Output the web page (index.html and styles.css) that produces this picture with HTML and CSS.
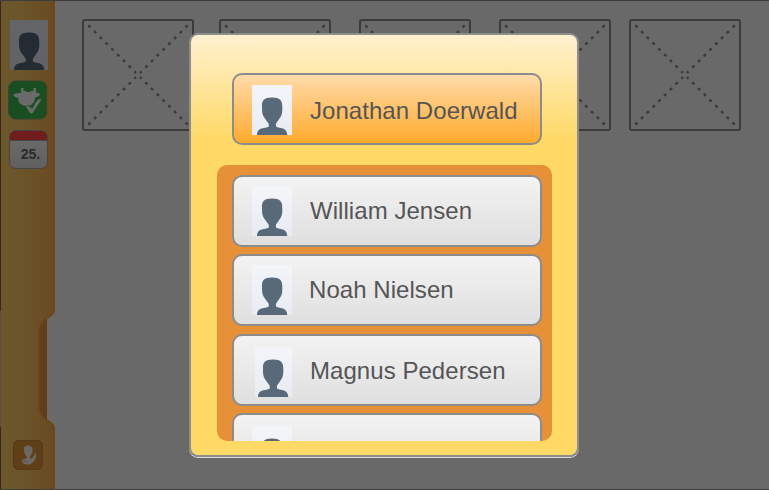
FILE: index.html
```html
<!DOCTYPE html>
<html lang="en">
<head>
<meta charset="utf-8">
<title>Choose profile</title>
<link rel="stylesheet" href="styles.css">
</head>
<body>
<svg class="defs" width="0" height="0" aria-hidden="true">
  <symbol id="person" viewBox="0 0 40 50">
    <path d="M10 22C9.500 15.500 12 12.500 20 12.500S30.500 15.500 30.300 22C30.500 29 29.500 31 26.500 35C24 38.500 23.800 38 24 41C24.500 43 28 42.300 31 43.500C34 44.500 35 47 35.300 50H5C5.200 47 6 44.500 9.500 43.500C13 42.300 16.500 43 16.800 41C17 38 16.500 38.500 14 35C11 31 9.800 29 10 22Z"/>
  </symbol>
  <symbol id="slot" viewBox="0 0 112 112">
    <rect x="1" y="1" width="110" height="110" rx="2" fill="none" stroke="#3b3b3b" stroke-width="2"/>
    <path d="M6.300 6.300L54 54M105.700 6.300L58 54M6.300 105.700L54 58M105.700 105.700L58 58" fill="none" stroke="#3b3b3b" stroke-width="2.400" stroke-dasharray="3 5.150"/>
  </symbol>
</svg>
<div class="app">
  <aside class="sidebar">
    <svg class="rail" width="56" height="490" viewBox="0 0 56 490">
      <defs>
        <linearGradient id="gold"><stop offset="0" stop-color="#6b572b"/><stop offset=".35" stop-color="#6b552a"/><stop offset="1" stop-color="#6a4a20"/></linearGradient>
      </defs>
      <path d="M38 318H47V420H38Z" fill="#603f17"/>
      <path d="M0 0H54.500V311Q53 315 48 317.500Q39 322 39 333V407Q39 416 46 420Q53 423 54.500 427V490H0Z" fill="url(#gold)"/>
      <path d="M54 0V311Q53 315 48 317.500Q39 322 39 333V407Q39 416 46 420Q53 423 54 427V490" fill="none" stroke="#6c4519" stroke-width="1.600"/>
      <path d="M.5 0V311M.5 427V490" stroke="#36291a"/>
      <path d="M.5 311V427" stroke="#5c513e"/>
    </svg>
    <svg class="user" viewBox="1 0 38 50"><use href="#person" width="40" height="50"/></svg>
    <svg class="approve" width="40" height="40" viewBox="0 0 40 40">
      <rect x=".7" y="1" width="38" height="38" rx="7" fill="#194f20" stroke="#36442d"/>
      <path d="M13 8H15.500V11H18.500V13H13ZM22.500 13V11H25.500V8H28V13Z" fill="#6a6a6a"/>
      <path d="M5 14.500Q8 12.500 14 13Q15 12 20 12T27 13Q31 12 32.500 14.500Q30 17 27 17.500Q27 21 25 23Q23 26 19 26Q15 26 12 23.500Q9 20 11 18Q7 18 5 14.500Z" fill="#6a6a6a"/>
      <path d="M17.500 27Q19.500 24.500 22 26.500L24 28.500Q27 21 32 18Q34 18 33 21Q28 28 25.500 32.500Q23 35.500 21 32Z" fill="#6a6a6a" stroke="#194f20" stroke-width=".8"/>
    </svg>
    <div class="calendar">25.</div>
    <svg class="profile-switch" width="30" height="30" viewBox="0 0 30 30">
      <rect x=".5" y=".5" width="29" height="29" rx="5" fill="#603f17" stroke="#51391e"/>
      <path d="M11 9Q11 5.500 15 5.500T19.500 9Q20 14 17 16V19Q21 18 22 12.500Q24 14 22.500 19Q19 25 14 24.500Q10 24.500 8 21Q11 22 15 21L8.500 20.500Q10 18 13.500 18.500V16Q11 14 11 9Z" fill="#6b6964"/>
    </svg>
  </aside>
  <main class="slots">
    <svg><use href="#slot"/></svg>
    <svg><use href="#slot"/></svg>
    <svg><use href="#slot"/></svg>
    <svg><use href="#slot"/></svg>
    <svg><use href="#slot"/></svg>
  </main>
  <section class="dialog">
    <button class="person current"><svg class="avatar" viewBox="0 0 40 50"><use href="#person" width="40" height="50"/></svg><span>Jonathan Doerwald</span></button>
    <div class="list">
      <button class="person"><svg class="avatar" viewBox="0 0 40 50"><use href="#person" width="40" height="50"/></svg><span>William Jensen</span></button>
      <button class="person noah"><svg class="avatar" viewBox="0 0 40 50"><use href="#person" width="40" height="50"/></svg><span>Noah Nielsen</span></button>
      <button class="person magnus"><svg class="avatar" viewBox="2 0 37 50"><use href="#person" width="40" height="50"/></svg><span>Magnus Pedersen</span></button>
      <button class="person last"><svg class="avatar" viewBox="0 0 40 50"><use href="#person" width="40" height="50"/></svg></button>
    </div>
  </section>
</div>
</body>
</html>
```
FILE: styles.css
```css
* { box-sizing: border-box; }
body { margin: 0; font-family: "Liberation Sans", Arial, sans-serif; }
.defs { position: absolute; }
.app {
  position: relative;
  display: flex;
  width: 769px;
  height: 490px;
  overflow: hidden;
  background: #696969;
}
.app::after {
  content: "";
  position: absolute;
  inset: 0;
  border: solid #3d3d3d;
  border-width: 1px 0;
}
.sidebar {
  position: relative;
  display: flex;
  flex-direction: column;
  align-items: flex-start;
  flex: none;
  width: 56px;
  height: 490px;
  padding: 20px 0 20px 8px;
}
.sidebar > * { position: relative; flex: none; }
.sidebar > .rail { position: absolute; left: 0; top: 0; }
.user {
  width: 38px;
  height: 50px;
  margin-left: 2px;
  background: linear-gradient(#646568, #606265);
  fill: #242b32;
}
.approve { margin-top: 10px; }
.calendar {
  width: 39px;
  height: 39px;
  margin: 10px 0 0 1px;
  padding: 4px 0 0 4px;
  border: 1px solid #464646;
  border-radius: 7px;
  background: linear-gradient(#711d1d 9px, #454545 9px, #454545 10px, #696969 10px, #606060);
  color: #2b2b2b;
  font: bold 14px/39px "Liberation Sans", Arial, sans-serif;
  text-align: center;
}
.profile-switch { margin: auto 0 0 5px; }
.slots {
  display: grid;
  grid-template-columns: 137px 140px 140px 130px 112px;
  align-content: start;
  padding: 19px 0 0 26px;
}
.slots svg { display: block; width: 112px; height: 112px; }
.dialog {
  position: absolute;
  left: 189px;
  top: 33px;
  width: 390px;
  height: 424px;
  padding: 38px 25px 0 26px;
  border: 2px solid #8d8d8d;
  border-radius: 9px;
  background: linear-gradient(#fff1cf, #ffd966 25%, #ffd966);
  box-shadow: 0 1px 0 #ddd;
}
.person {
  display: flex;
  align-items: flex-start;
  flex: none;
  width: 310px;
  height: 72px;
  padding: 0 0 0 18px;
  border: 2px solid #8c8c8c;
  border-radius: 10px;
  background: linear-gradient(#f3f3f3, #dfdfdf);
  color: #555;
  font: 24px/28px "Liberation Sans", Arial, sans-serif;
  letter-spacing: .05px;
  text-align: left;
  white-space: nowrap;
}
.person span { margin-top: 20px; }
.person.current { margin-left: 15px; background: linear-gradient(#ffdbaa, #ffaa2c); }
.person.current span { margin-top: 22px; }
.avatar {
  flex: none;
  width: 40px;
  height: 50px;
  margin: 9px 18px 0 0;
  background: linear-gradient(#f3f5f9, #e8ecf2);
  fill: #586a79;
}
.current .avatar { margin-top: 10px; }
.list {
  display: flex;
  flex-direction: column;
  gap: 7.5px;
  width: 335px;
  height: 276px;
  margin-top: 19.500px;
  padding: 10px 15px 0;
  border-radius: 10px;
  background: #e69138;
  overflow: hidden;
}
.noah span { margin-left: -1px; }
.magnus .avatar { width: 37px; margin-left: 3px; margin-top: 11px; }
.magnus span { margin-top: 21.5px; }
.last .avatar { margin-top: 11px; }
```
